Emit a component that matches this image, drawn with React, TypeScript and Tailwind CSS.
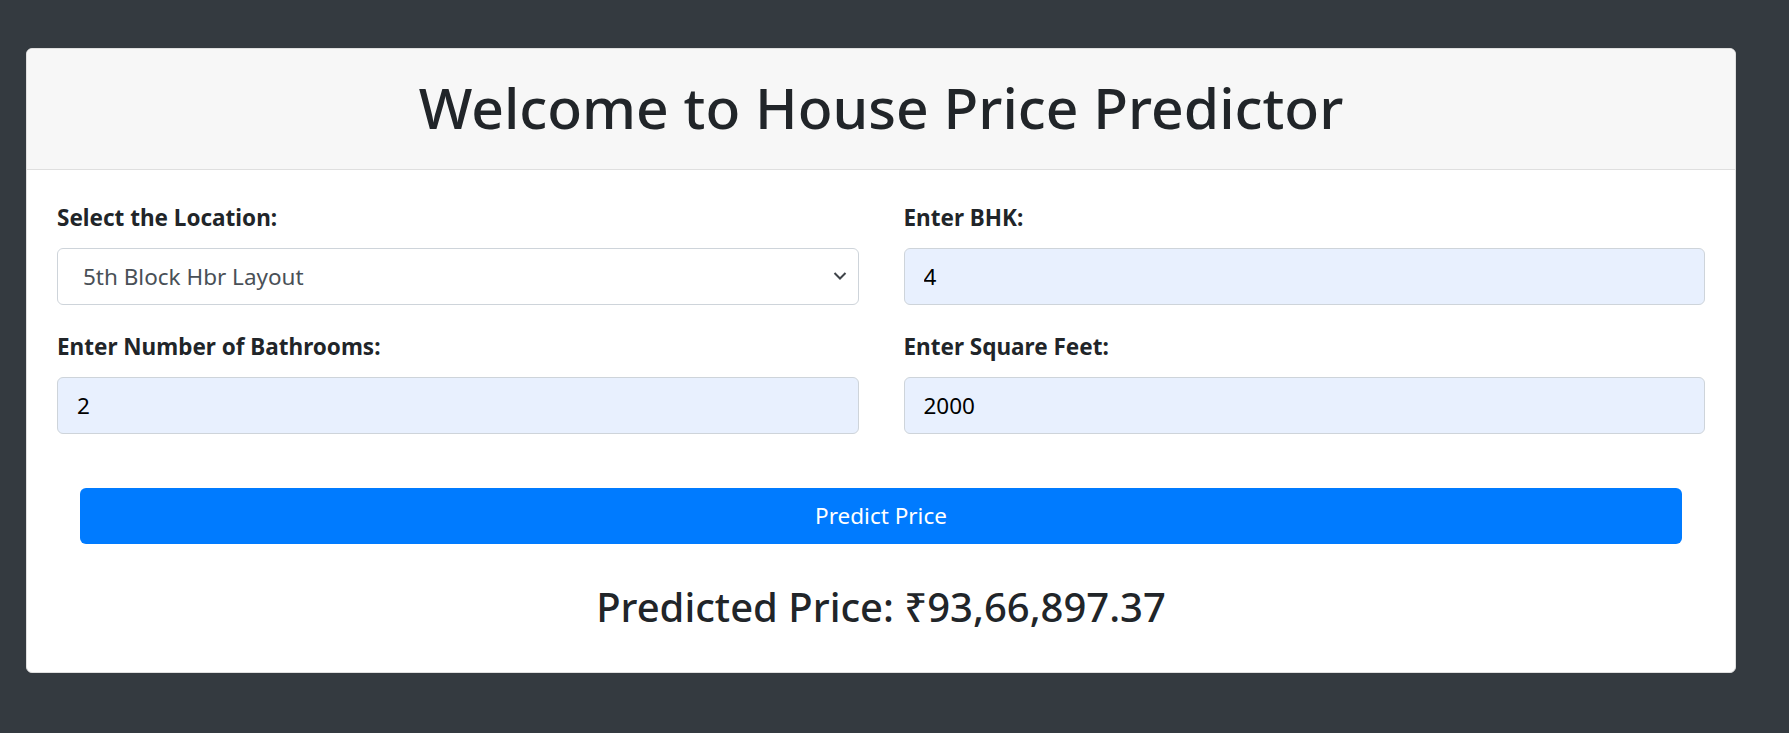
import React from "react";

const font = { fontFamily: '"Noto Sans", "Open Sans", sans-serif' };

function Field({ label, value, select }: { label: string; value: string; select?: boolean }) {
  return (
    <div className="mb-[24px]">
      <label className="block text-[22.5px] leading-[36px] font-bold text-[#212529] mb-[12px]">{label}</label>
      {select ? (
        <div className="relative">
          <select
            defaultValue={value}
            className="block w-full h-[57px] appearance-none rounded-[6px] border border-[#ced4da] bg-white pl-[25px] pr-[40px] text-[22.5px] text-[#495057] outline-none"
            style={font}
          >
            <option>{value}</option>
          </select>
          <svg className="pointer-events-none absolute right-[11px] top-[22px]" width="16" height="12" viewBox="0 0 16 12">
            <path d="M2.5 3 L8 8.5 L13.5 3" fill="none" stroke="#3f4449" strokeWidth="2" />
          </svg>
        </div>
      ) : (
        <input
          defaultValue={value}
          className="block w-full h-[57px] rounded-[6px] border border-[#ced4da] bg-[#e8f0fe] px-[19px] text-[22.5px] text-black outline-none"
          style={font}
        />
      )}
    </div>
  );
}

export default function App() {
  return (
    <div className="min-h-[733px] bg-[#343a40] pt-[48px] pb-[60px]" style={font}>
      <div className="ml-[26px] w-[1710px] rounded-[6px] border border-[#dfdfdf] bg-white overflow-hidden">
        <div className="bg-[#f7f7f7] border-b border-[#dfdfdf] px-[30px] pt-[22px] pb-[26px]">
          <h1 className="text-center text-[57px] leading-[72px] font-medium text-[#212529]">Welcome to House Price Predictor</h1>
        </div>
        <div className="px-[30px] pt-[30px] pb-[40px]">
          <div className="grid grid-cols-2 gap-x-[45px]">
            <Field label="Select the Location:" value="5th Block Hbr Layout" select />
            <Field label="Enter BHK:" value="4" />
            <Field label="Enter Number of Bathrooms:" value="2" />
            <Field label="Enter Square Feet:" value="2000" />
          </div>
          <div className="mx-[23px] mt-[30px]">
            <button className="w-full h-[56px] rounded-[6px] bg-[#007bff] text-white text-[22.5px]">Predict Price</button>
          </div>
          <div className="mt-[38px] text-center text-[40px] leading-[50px] font-medium text-[#212529]">Predicted Price: ₹93,66,897.37</div>
        </div>
      </div>
    </div>
  );
}
